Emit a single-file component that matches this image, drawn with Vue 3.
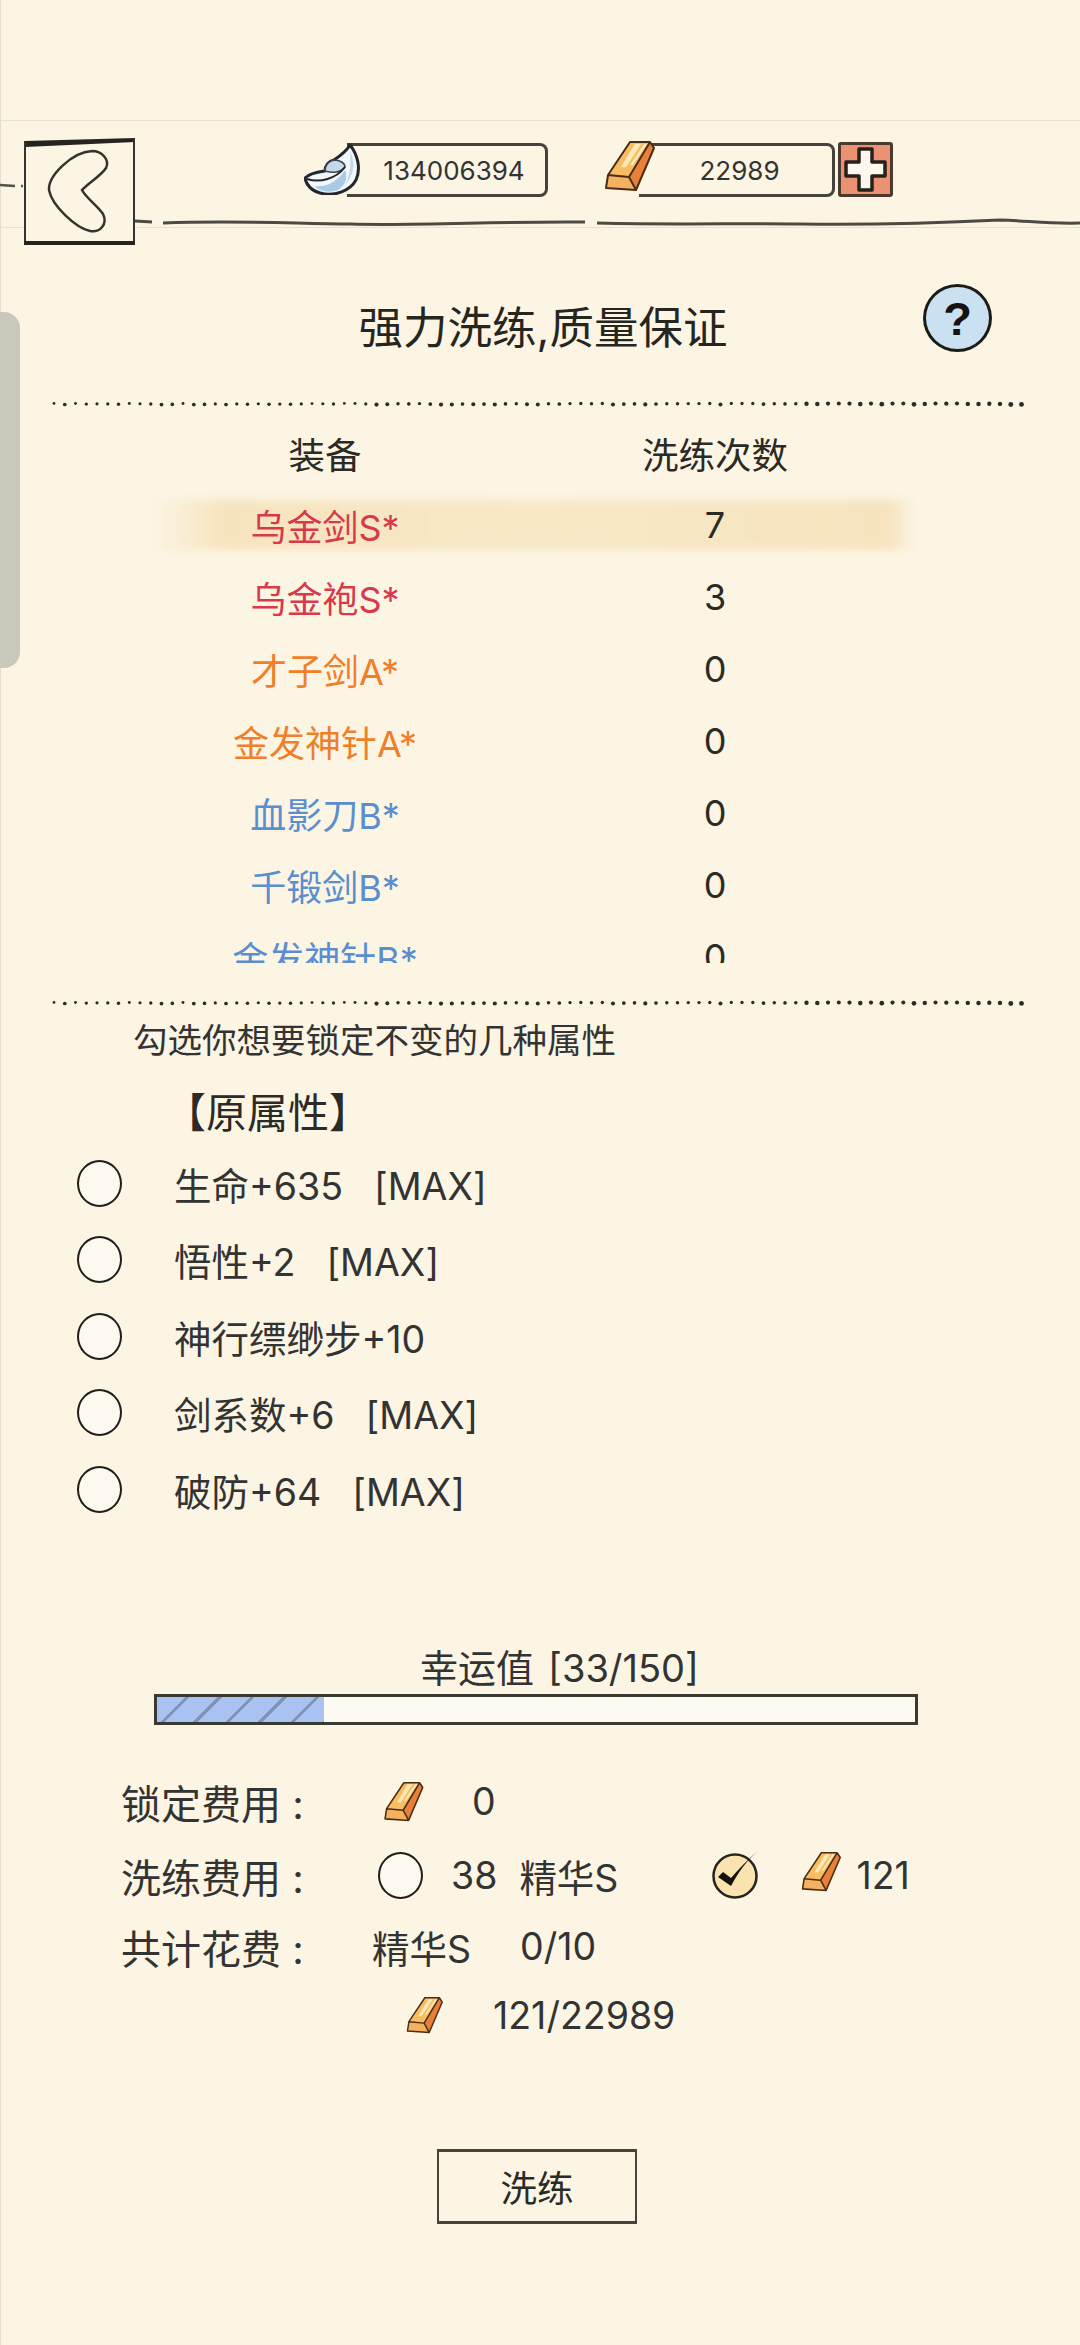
<script setup>
const dots = []
for (let i = 0; i <= 90; i++) {
  const x = 2 + i * 10.75
  const wobble = Math.sin(i * 12.9898) * 43758.5453
  const f = wobble - Math.floor(wobble)
  const base = i < 30 ? 1.4 : i < 70 ? 1.6 : 2
  dots.push({ x: x.toFixed(1), y: (4 + (f - 0.5) * 1.2).toFixed(1), r: (base + f * 0.5).toFixed(2) })
}

const gear = [
  { name: '乌金剑S*', count: 7, tone: 'red', active: true },
  { name: '乌金袍S*', count: 3, tone: 'red' },
  { name: '才子剑A*', count: 0, tone: 'orange' },
  { name: '金发神针A*', count: 0, tone: 'orange' },
  { name: '血影刀B*', count: 0, tone: 'blue' },
  { name: '千锻剑B*', count: 0, tone: 'blue' },
  { name: '金发神针B*', count: 0, tone: 'blue' }
]

const attrs = [
  { text: '生命+635', max: true },
  { text: '悟性+2', max: true },
  { text: '神行缥缈步+10', max: false },
  { text: '剑系数+6', max: true },
  { text: '破防+64', max: true }
]
</script>

<template>
  <div class="page">
    <svg class="defs" width="0" height="0" aria-hidden="true">
      <symbol id="gold" viewBox="0 0 51 51">
        <path d="M26 1 L46 1 L25 36 L4 34 Z" fill="#f8bd60" />
        <path d="M31 3 L37 3 L22 26 L17 26 Z M40 3 L43 3 L29 24 L26 24 Z" fill="#fde9b8" />
        <path d="M46 1 L50 7 L32 49 L25 36 Z" fill="#e8803a" />
        <path d="M4 34 L25 36 L32 49 L2 47 Z" fill="#f5b060" />
        <path d="M26 1 L46 1 L50 7 L32 49 L2 47 L4 34 Z M4 34 L25 36 L46 1 M25 36 L32 49" fill="none" stroke="#4a2d14" stroke-width="2" stroke-linejoin="round" />
      </symbol>
    </svg>

    <div class="rail"></div>

    <div class="top"></div>

    <header class="header">
      <svg class="ink" width="1080" height="60" viewBox="0 0 1080 60" aria-hidden="true">
        <path d="M0 8 L15 9 M21 9 L23 9" fill="none" stroke="#55524a" stroke-width="2.5" />
        <path d="M135 44 L152 45 M163 46 C 240 43 300 47 350 47 C 420 49 500 44 585 45 M597 46 C 680 48 740 46 800 47 C 880 48 940 46 1000 43 C 1030 44 1050 47 1080 46" fill="none" stroke="#4c4a42" stroke-width="3" />
      </svg>

      <button class="back" aria-label="返回">
        <svg width="111" height="108" viewBox="0 0 111 108">
          <path d="M1 3 L111 0 L111 4 L1 9 Z" fill="#26241f" />
          <path d="M1 3 V106 M110 1 V106" stroke="#35332d" stroke-width="2" fill="none" />
          <path d="M0 105 H111" stroke="#26241f" stroke-width="4" fill="none" />
          <path d="M68 13 C 78 13 86 22 82 30 C 77 38 64 45 58 52 C 62 60 74 68 79 76 C 84 86 76 95 66 93 C 52 90 28 68 25 52 C 24 38 48 14 68 13 Z" fill="none" stroke="#35332d" stroke-width="2.5" />
        </svg>
      </button>

      <div class="wallet first">
        <svg class="coin" width="57" height="52" viewBox="0 0 57 52">
          <path d="M46 2 C 54 12 57 26 52 37 C 46 48 30 54 16 50 C 8 48 2 42 1 35 C 6 30 14 29 21 28 C 21 22 25 18 30 17 C 36 13 42 9 46 2 Z" fill="#f4f7fa" stroke="#23272c" stroke-width="3" stroke-linejoin="round" />
          <path d="M10 43 C 22 45 34 38 41 27 C 44 34 42 42 34 47 C 26 50 16 49 10 43 Z" fill="#a9cbe8" />
          <path d="M46 8 C 52 20 50 32 41 42 C 47 30 47 20 46 8 Z" fill="#c2d8ea" />
          <path d="M21 28 C 21 22 25 18 30 17 C 36 17 41 20 41 24 C 36 30 28 30 21 28 Z" fill="#c5d9ec" stroke="#3c4650" stroke-width="1.5" />
          <path d="M3 36 C 16 40 32 36 41 24" fill="none" stroke="#23272c" stroke-width="2" />
        </svg>
        <div class="pill silver">134006394</div>
      </div>

      <div class="wallet second">
        <svg class="coin" width="51" height="51"><use href="#gold" /></svg>
        <div class="pill goldpill">22989</div>
        <button class="plus" aria-label="充值">
          <svg width="49" height="49" viewBox="0 0 49 49">
            <path d="M18 4 H31 V17 H44 V31 H31 V45 H18 V31 H5 V17 H18 Z" fill="#fdf8ee" stroke="#26211c" stroke-width="3.5" stroke-linejoin="round" />
          </svg>
        </button>
      </div>
    </header>

    <main>
      <div class="title-row">
        <span></span>
        <h1 class="title">强力洗练,质量保证</h1>
        <div class="help-cell"><span class="help">?</span></div>
      </div>

      <svg class="dots first-dots" width="972" height="8" viewBox="0 0 972 8" aria-hidden="true">
        <circle v-for="d in dots" :key="d.x" :cx="d.x" :cy="d.y" :r="d.r" fill="#2d2b26" />
      </svg>

      <div class="table-head">
        <span>装备</span>
        <span>洗练次数</span>
      </div>

      <div class="list">
        <div v-for="g in gear" :key="g.name + g.tone" class="gear-row" :class="{ active: g.active }">
          <span class="gear-name" :class="g.tone">{{ g.name }}</span>
          <span class="gear-count">{{ g.count }}</span>
        </div>
      </div>

      <svg class="dots second-dots" width="972" height="8" viewBox="0 0 972 8" aria-hidden="true">
        <circle v-for="d in dots" :key="d.x" :cx="d.x" :cy="d.y" :r="d.r" fill="#2d2b26" />
      </svg>

      <p class="hint">勾选你想要锁定不变的几种属性</p>
      <p class="attr-title">【原属性】</p>

      <div class="attrs">
        <div v-for="a in attrs" :key="a.text" class="attr-row">
          <span class="radio"></span>
          <span class="attr-text">{{ a.text }}<span v-if="a.max" class="max">[MAX]</span></span>
        </div>
      </div>

      <div class="luck-label">幸运值<span class="luck-num">[33/150]</span></div>
      <div class="bar"><div class="bar-fill" :style="{ width: (33 / 150 * 100).toFixed(1) + '%' }"></div></div>

      <div class="cost r1">
        <span class="label">锁定费用 :</span>
        <svg class="g1" width="41" height="40"><use href="#gold" /></svg>
        <span class="v-zero">0</span>
      </div>
      <div class="cost r2">
        <span class="label">洗练费用 :</span>
        <span class="radio"></span>
        <span class="v-38">38</span>
        <span class="v-ess">精华S</span>
        <svg class="check" width="48" height="50" viewBox="0 0 48 50">
          <ellipse cx="23" cy="27" rx="21.5" ry="21.5" fill="#fbe3b0" stroke="#26241f" stroke-width="2.5" />
          <path d="M6 28 L19 37 C 26 24 34 12 47 1 C 36 10 27 20 19 29 L11 23 Z" fill="#14130f" />
        </svg>
        <svg class="g2" width="40" height="40"><use href="#gold" /></svg>
        <span class="v-121">121</span>
      </div>
      <div class="cost r3">
        <span class="label">共计花费 :</span>
        <span class="v-ess3">精华S</span>
        <span class="v-frac">0/10</span>
      </div>
      <div class="cost r4">
        <svg class="g4" width="37" height="39"><use href="#gold" /></svg>
        <span class="v-total">121/22989</span>
      </div>

      <button class="action">洗练</button>
    </main>
  </div>
</template>

<style>
html, body { margin: 0; background: #fcf5e4; }
</style>

<style scoped>
.page {
  position: relative;
  width: 1080px;
  height: 2345px;
  overflow: hidden;
  background: #fcf5e4;
  color: #2b2a26;
  font-family: Inter, "Noto Sans CJK SC", "Noto Sans", sans-serif;
  box-shadow: inset 1px 0 0 #e4dfd0;
}
.defs { position: absolute; }
.rail {
  position: absolute;
  left: 0;
  top: 312px;
  width: 20px;
  height: 356px;
  background: #c9c8ba;
  border-radius: 0 16px 16px 0;
}
.top {
  height: 121px;
  box-sizing: border-box;
  border-bottom: 1px solid #e6e1d2;
}
.header {
  position: relative;
  display: flex;
  align-items: flex-start;
  height: 107px;
  box-sizing: border-box;
  padding: 22px 0 0 24px;
  border-bottom: 1px solid #e6e1d2;
}
.ink { position: absolute; left: 0; top: 56px; }
.back {
  position: relative;
  width: 111px;
  height: 108px;
  margin-top: -5px;
  padding: 0;
  border: 0;
  background: #fcf5e4;
  flex: none;
}
.back svg { display: block; }
.wallet { position: relative; display: flex; align-items: flex-start; }
.wallet.first { margin-left: 169px; }
.wallet.second { margin-left: 56px; margin-top: -2px; }
.coin { position: relative; z-index: 1; flex: none; display: block; }
.pill {
  display: flex;
  align-items: center;
  justify-content: center;
  box-sizing: border-box;
  height: 54px;
  border: solid #45433c;
  border-width: 3px 3px 3px 0;
  border-radius: 0 8px 8px 0;
  font-size: 26px;
  color: #333;
}
.silver { width: 201px; margin-left: -14px; padding-left: 16px; }
.goldpill { width: 196px; margin-left: -16px; margin-top: 2px; padding-left: 8px; }
.plus {
  width: 55px;
  height: 55px;
  margin: 1px 0 0 3px;
  padding: 0;
  box-sizing: border-box;
  background: #ea9272;
  border: 3px solid #4a3a30;
  border-radius: 3px;
}
.plus svg { display: block; }

.title-row {
  display: grid;
  grid-template-columns: 1fr auto 1fr;
  height: 74px;
  margin-top: 56px;
  padding-left: 6px;
}
.title {
  align-self: end;
  margin: 0;
  font-size: 44.5px;
  font-weight: 400;
  line-height: 60px;
  color: #26251f;
}
.help-cell { display: flex; justify-content: flex-end; padding-right: 88px; }
.help {
  display: flex;
  align-items: center;
  justify-content: center;
  width: 69px;
  height: 68px;
  box-sizing: border-box;
  border: 3.5px solid #1c1b18;
  border-radius: 50%;
  background: #c9e1f0;
  font-family: "Liberation Sans", sans-serif;
  font-size: 47px;
  font-weight: 700;
  color: #141310;
}

.dots { display: block; margin-left: 52px; }
.first-dots { margin-top: 42px; }
.second-dots { margin-top: 36px; }

.table-head {
  display: grid;
  grid-template-columns: 390px 390px;
  margin-top: 23px;
  padding-left: 130px;
  height: 50px;
  line-height: 50px;
  font-size: 36.5px;
  text-align: center;
}
.list {
  height: 474px;
  margin-top: 8px;
  overflow: hidden;
}
.gear-row {
  position: relative;
  display: grid;
  grid-template-columns: 390px 390px;
  height: 72px;
  padding-left: 130px;
  align-items: center;
  text-align: center;
  font-size: 36px;
}
.gear-row > span { position: relative; }
.gear-row.active::before {
  content: "";
  position: absolute;
  left: 152px;
  right: 166px;
  top: 11px;
  bottom: 11px;
  background: linear-gradient(90deg, transparent 0, #f7e4bf 9%, #f8e8c6 50%, #f7e4bf 97%, transparent 100%);
  filter: blur(4px);
}
.red { color: #d8394b; }
.orange { color: #ef7f28; }
.blue { color: #5a8ecf; }

.hint {
  margin: 12px 0 0;
  padding-left: 133px;
  font-size: 34.5px;
  line-height: 44px;
  color: #333;
}
.attr-title {
  margin: 22px 0 0;
  padding-left: 165px;
  font-size: 41px;
  line-height: 56px;
  color: #2b2a26;
}
.attrs { margin-top: 4px; }
.attr-row {
  display: flex;
  align-items: center;
  height: 76.5px;
  padding-left: 77px;
  gap: 52px;
}
.radio {
  flex: none;
  display: block;
  width: 45px;
  height: 47px;
  box-sizing: border-box;
  border: 2.5px solid #1f1e1a;
  border-radius: 50%;
  background: #fdf9f0;
}
.attr-text { font-size: 37.5px; color: #333; white-space: nowrap; }
.max { margin-left: 31px; }

.luck-label {
  margin-top: 115.25px;
  height: 50px;
  line-height: 50px;
  font-size: 38px;
  text-align: center;
  padding-left: 39px;
  color: #333;
}
.luck-num { margin-left: 14px; }
.bar {
  width: 764px;
  height: 31px;
  margin: 1px 0 0 154px;
  box-sizing: border-box;
  border: 3px solid #3a3932;
  background: #fdfaf2;
}
.bar-fill {
  height: 100%;
  background: repeating-linear-gradient(135deg, #a9c2f2 0 20px, #8194b8 20px 23px);
}

.cost {
  display: flex;
  align-items: center;
  height: 70px;
  padding-left: 121px;
  font-size: 37.5px;
  color: #333;
  white-space: nowrap;
}
.label { width: 257px; flex: none; font-size: 40px; }
.r1 { margin-top: 42px; }
.r2 { margin-top: 4px; }
.r3 { margin-top: 1px; }
.r4 { height: 68px; padding-left: 406px; }
.g1 { margin-left: 5px; }
.v-zero { margin-left: 48px; }
.v-38 { margin-left: 28px; }
.v-ess { margin-left: 22px; }
.check { margin-left: 94px; margin-top: -4px; }
.g2 { margin-left: 41px; margin-top: -8px; }
.v-121 { margin-left: 15px; }
.v-ess3 { margin-left: -6px; }
.v-frac { margin-left: 49px; }
.v-total { margin-left: 50px; }

.action {
  display: block;
  width: 200px;
  height: 75px;
  margin: 99px 0 0 437px;
  padding: 0;
  box-sizing: border-box;
  background: transparent;
  border: 2px solid #45433c;
  border-top-width: 3px;
  border-bottom-width: 3px;
  font: inherit;
  font-size: 36.5px;
  color: #2b2a26;
}
</style>
